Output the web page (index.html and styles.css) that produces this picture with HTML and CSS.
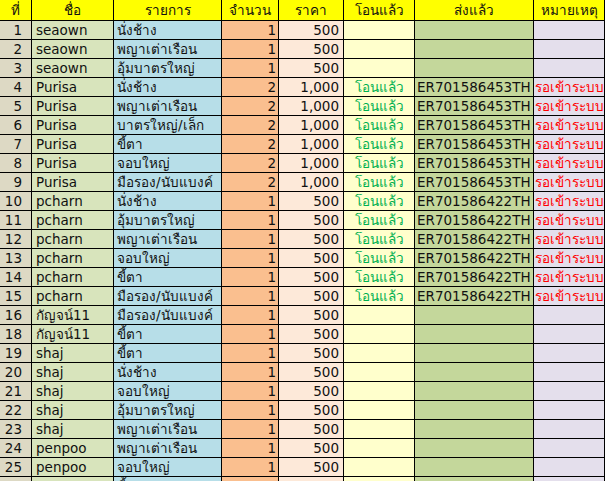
FILE: index.html
```html
<!DOCTYPE html>
<html lang="th">
<head>
<meta charset="utf-8">
<title>Sheet</title>
<link rel="stylesheet" href="styles.css">
</head>
<body>
<div class="sheet">
  <div class="row head"><span>ที่</span><span>ชื่อ</span><span>รายการ</span><span>จำนวน</span><span>ราคา</span><span>โอนแล้ว</span><span>ส่งแล้ว</span><span>หมายเหตุ</span></div>
  <div class="row rec"><span>1</span><span>seaown</span><span>นั่งช้าง</span><span>1</span><span>500</span><span></span><span></span><span></span></div>
  <div class="row rec"><span>2</span><span>seaown</span><span>พญาเต่าเรือน</span><span>1</span><span>500</span><span></span><span></span><span></span></div>
  <div class="row rec"><span>3</span><span>seaown</span><span>อุ้มบาตรใหญ่</span><span>1</span><span>500</span><span></span><span></span><span></span></div>
  <div class="row rec"><span>4</span><span>Purisa</span><span>นั่งช้าง</span><span>2</span><span>1,000</span><span>โอนแล้ว</span><span>ER701586453TH</span><span>รอเข้าระบบ</span></div>
  <div class="row rec"><span>5</span><span>Purisa</span><span>พญาเต่าเรือน</span><span>2</span><span>1,000</span><span>โอนแล้ว</span><span>ER701586453TH</span><span>รอเข้าระบบ</span></div>
  <div class="row rec"><span>6</span><span>Purisa</span><span>บาตรใหญ่/เล็ก</span><span>2</span><span>1,000</span><span>โอนแล้ว</span><span>ER701586453TH</span><span>รอเข้าระบบ</span></div>
  <div class="row rec"><span>7</span><span>Purisa</span><span>ขี้ตา</span><span>2</span><span>1,000</span><span>โอนแล้ว</span><span>ER701586453TH</span><span>รอเข้าระบบ</span></div>
  <div class="row rec"><span>8</span><span>Purisa</span><span>จอบใหญ่</span><span>2</span><span>1,000</span><span>โอนแล้ว</span><span>ER701586453TH</span><span>รอเข้าระบบ</span></div>
  <div class="row rec"><span>9</span><span>Purisa</span><span>มือรอง/นับแบงค์</span><span>2</span><span>1,000</span><span>โอนแล้ว</span><span>ER701586453TH</span><span>รอเข้าระบบ</span></div>
  <div class="row rec"><span>10</span><span>pcharn</span><span>นั่งช้าง</span><span>1</span><span>500</span><span>โอนแล้ว</span><span>ER701586422TH</span><span>รอเข้าระบบ</span></div>
  <div class="row rec"><span>11</span><span>pcharn</span><span>อุ้มบาตรใหญ่</span><span>1</span><span>500</span><span>โอนแล้ว</span><span>ER701586422TH</span><span>รอเข้าระบบ</span></div>
  <div class="row rec"><span>12</span><span>pcharn</span><span>พญาเต่าเรือน</span><span>1</span><span>500</span><span>โอนแล้ว</span><span>ER701586422TH</span><span>รอเข้าระบบ</span></div>
  <div class="row rec"><span>13</span><span>pcharn</span><span>จอบใหญ่</span><span>1</span><span>500</span><span>โอนแล้ว</span><span>ER701586422TH</span><span>รอเข้าระบบ</span></div>
  <div class="row rec"><span>14</span><span>pcharn</span><span>ขี้ตา</span><span>1</span><span>500</span><span>โอนแล้ว</span><span>ER701586422TH</span><span>รอเข้าระบบ</span></div>
  <div class="row rec"><span>15</span><span>pcharn</span><span>มือรอง/นับแบงค์</span><span>1</span><span>500</span><span>โอนแล้ว</span><span>ER701586422TH</span><span>รอเข้าระบบ</span></div>
  <div class="row rec"><span>16</span><span>กัญจน์11</span><span>มือรอง/นับแบงค์</span><span>1</span><span>500</span><span></span><span></span><span></span></div>
  <div class="row rec"><span>18</span><span>กัญจน์11</span><span>ขี้ตา</span><span>1</span><span>500</span><span></span><span></span><span></span></div>
  <div class="row rec"><span>19</span><span>shaj</span><span>ขี้ตา</span><span>1</span><span>500</span><span></span><span></span><span></span></div>
  <div class="row rec"><span>20</span><span>shaj</span><span>นั่งช้าง</span><span>1</span><span>500</span><span></span><span></span><span></span></div>
  <div class="row rec"><span>21</span><span>shaj</span><span>จอบใหญ่</span><span>1</span><span>500</span><span></span><span></span><span></span></div>
  <div class="row rec"><span>22</span><span>shaj</span><span>อุ้มบาตรใหญ่</span><span>1</span><span>500</span><span></span><span></span><span></span></div>
  <div class="row rec"><span>23</span><span>shaj</span><span>พญาเต่าเรือน</span><span>1</span><span>500</span><span></span><span></span><span></span></div>
  <div class="row rec"><span>24</span><span>penpoo</span><span>พญาเต่าเรือน</span><span>1</span><span>500</span><span></span><span></span><span></span></div>
  <div class="row rec"><span>25</span><span>penpoo</span><span>จอบใหญ่</span><span>1</span><span>500</span><span></span><span></span><span></span></div>
  <div class="row rec"><span></span><span></span><span>ขี้ตา</span><span></span><span></span><span></span><span></span><span></span></div>
</div>
</body>
</html>
```
FILE: styles.css
```css
html, body {
  margin: 0;
  padding: 0;
  background: #ffffff;
  overflow: hidden;
}

.sheet {
  width: 605px;
  font-family: "DejaVu Sans", "Noto Sans", sans-serif;
  font-size: 13.5px;
  color: #111111;
}

.row {
  display: grid;
  grid-template-columns: 32px 82px 108px 57px 65px 71px 119px 71px;
  height: 19px;
}

.row > span {
  box-sizing: border-box;
  border-right: 1px solid #000000;
  border-bottom: 1px solid #000000;
  overflow: hidden;
  white-space: nowrap;
  padding: 0 2px 0 3px;
  line-height: 18px;
}

.head {
  height: 21px;
}

.row.head > span {
  background: #ffff00;
  text-align: center;
  line-height: 20px;
  padding: 0;
}

.rec > :nth-child(1) { background: #ddd9c4; text-align: right; padding-right: 9px; }
.rec > :nth-child(2) { background: #d8e4bc; padding-left: 4px; }
.rec > :nth-child(3) { background: #b7dee8; }
.rec > :nth-child(4) { background: #fabf8f; text-align: right; }
.rec > :nth-child(5) { background: #fde9d9; text-align: right; padding-right: 4px; }
.rec > :nth-child(6) { background: #ffffcc; color: #00b050; text-align: center; padding: 0; }
.rec > :nth-child(7) { background: #c4d79b; padding-left: 2px; padding-right: 0; }
.rec > :nth-child(8) { background: #e4dfec; color: #ff0000; padding-left: 1px; padding-right: 0; }
```
